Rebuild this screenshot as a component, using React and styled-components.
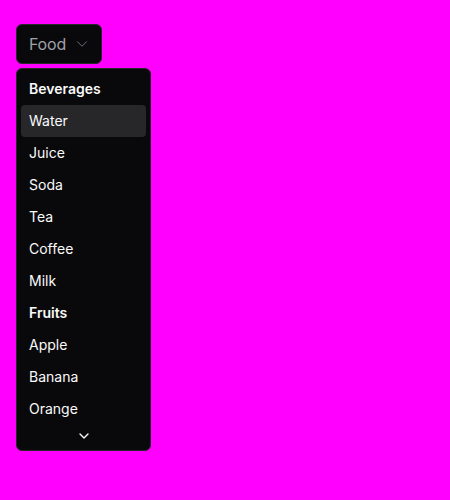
import React from "react";
import styled, { createGlobalStyle } from "styled-components";

const Global = createGlobalStyle`
  html, body { margin: 0; padding: 0; background: #ff00ff; }
  body { font-family: Inter, "Noto Sans", sans-serif; -webkit-font-smoothing: antialiased; }
`;

const Page = styled.div`
  padding: 24px 16px;
  display: flex;
  flex-direction: column;
  align-items: flex-start;
  gap: 4px;
`;

const Trigger = styled.button`
  box-sizing: border-box;
  height: 40px;
  width: 86px;
  display: flex;
  align-items: center;
  gap: 7px;
  padding: 0 0 1px 12px;
  background: #09090b;
  border: 1px solid #27272a;
  border-radius: 6px;
  color: #a1a1aa;
  font-family: Inter, sans-serif;
  font-size: 16px;
  letter-spacing: -0.2px;
  cursor: pointer;
`;

const Menu = styled.div`
  box-sizing: border-box;
  width: 135px;
  height: 383px;
  background: #09090b;
  border: 1px solid #27272a;
  border-radius: 6px;
  padding: 4px;
  display: flex;
  flex-direction: column;
  overflow: hidden;
`;

const Row = styled.div`
  height: 32px;
  flex-shrink: 0;
  box-sizing: border-box;
  display: flex;
  align-items: center;
  padding: 0 8px 1px;
  border-radius: 4px;
  color: #fafafa;
  font-size: 14px;
  font-weight: ${(p) => (p.$label ? 600 : 400)};
  background: ${(p) => (p.$active ? "#27272a" : "transparent")};
`;

const ScrollBtn = styled.div`
  flex: 1;
  display: flex;
  align-items: center;
  justify-content: center;
  color: #fafafa;
`;

const Chevron = ({ size = 16, color = "currentColor", sw = 2 }) => (
  <svg width={size} height={size} viewBox="0 0 24 24" fill="none" stroke={color} strokeWidth={sw} strokeLinecap="round" strokeLinejoin="round">
    <path d="m6 9 6 6 6-6" />
  </svg>
);

const items = [
  { t: "Beverages", label: true },
  { t: "Water", active: true },
  { t: "Juice" },
  { t: "Soda" },
  { t: "Tea" },
  { t: "Coffee" },
  { t: "Milk" },
  { t: "Fruits", label: true },
  { t: "Apple" },
  { t: "Banana" },
  { t: "Orange" },
];

export default function App() {
  return (
    <>
      <Global />
      <Page>
        <Trigger>
          Food
          <Chevron size={18} color="#71717a" sw={1.3} />
        </Trigger>
        <Menu>
          {items.map((i) => (
            <Row key={i.t} $label={i.label} $active={i.active}>
              {i.t}
            </Row>
          ))}
          <ScrollBtn>
            <Chevron size={16} />
          </ScrollBtn>
        </Menu>
      </Page>
    </>
  );
}
